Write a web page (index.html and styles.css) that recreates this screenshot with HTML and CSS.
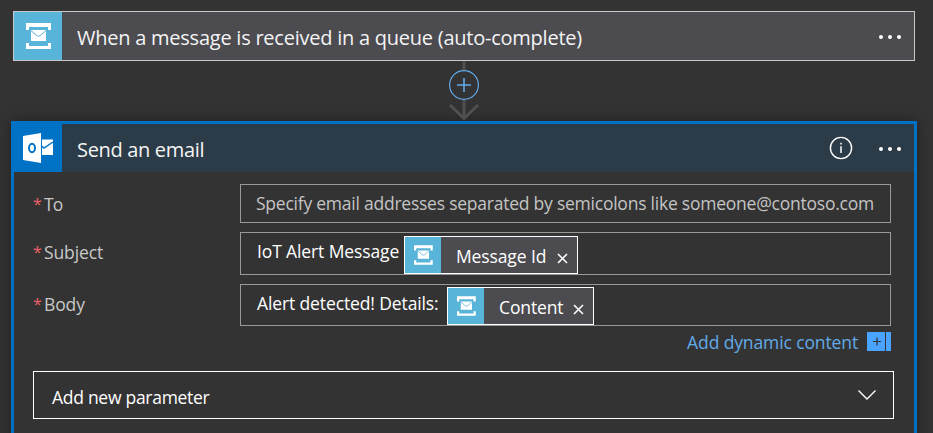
FILE: index.html
```html
<!DOCTYPE html>
<html lang="en">
<head>
<meta charset="utf-8">
<title>Logic app designer</title>
<link rel="stylesheet" href="styles.css">
</head>
<body>
<svg class="defs" aria-hidden="true">
  <symbol id="queue" viewBox="0 0 48 48">
    <path fill="#fff" d="M12 11h25v7h-3v-3H15v3h-3zM12 31h3v3h19v-3h3v6H12zM17 18h15v11H17z"/>
    <path fill="none" stroke="#59b4d9" stroke-width="1" d="M17 18.500l6 5.200q1.500 1 3 0l6-5.200"/>
  </symbol>
</svg>
<main class="designer">
  <section class="card trigger">
    <div class="brand queue"><svg width="48" height="48"><use href="#queue"/></svg></div>
    <h2 class="title">When a message is received in a queue (auto-complete)</h2>
    <div class="dots"><i></i><i></i><i></i></div>
  </section>
  <div class="connector">
    <svg width="34" height="60" viewBox="0 0 34 60">
      <path d="M17 0v58M3 44l14 13.500L31 44" fill="none" stroke="#505050" stroke-width="3"/>
      <circle cx="17" cy="24" r="14.400" fill="#333" stroke="#62aae8" stroke-width="1.200"/>
      <path d="M10 24h14M17 17v14" stroke="#62aae8" stroke-width="1.600"/>
    </svg>
  </div>
  <section class="card action">
    <header class="head">
      <div class="brand outlook">
        <svg width="48" height="48" viewBox="0 0 48 48">
          <path fill="#fff" d="M9 12l18-3v30L9 36zM28 15.500h11V31H28z"/>
          <path d="M27 21.500l3 2.500 9-6" fill="none" stroke="#0072c6" stroke-width="1.500"/>
          <ellipse cx="18" cy="24" rx="3" ry="4.200" fill="none" stroke="#0072c6" stroke-width="2"/>
        </svg>
      </div>
      <h2 class="title short">Send an email</h2>
      <svg class="info" width="24" height="24" viewBox="0 0 24 24">
        <circle cx="12" cy="12" r="10.600" fill="none" stroke="#fff" stroke-width="1.400"/>
        <path d="M12 10.300v6.700M12 6.800v1.700" stroke="#fff" stroke-width="1.500"/>
      </svg>
      <div class="dots"><i></i><i></i><i></i></div>
    </header>
    <div class="fields">
      <label class="label to"><b>*</b><span>To</span></label>
      <div class="input"><span class="hint">Specify email addresses separated by semicolons like someone@contoso.com</span></div>
      <label class="label"><b>*</b><span>Subject</span></label>
      <div class="input"><span class="value subject">IoT Alert Message</span>
        <div class="token message"><div class="brand small"><svg width="36" height="36"><use href="#queue"/></svg></div><span>Message Id</span><svg class="close" width="11" height="11" viewBox="0 0 11 11"><path d="M1 1l9 9M10 1l-9 9"/></svg></div>
      </div>
      <label class="label"><b>*</b><span>Body</span></label>
      <div class="input"><span class="value body">Alert detected! Details:</span>
        <div class="token content"><div class="brand small"><svg width="36" height="36"><use href="#queue"/></svg></div><span>Content</span><svg class="close" width="11" height="11" viewBox="0 0 11 11"><path d="M1 1l9 9M10 1l-9 9"/></svg></div>
      </div>
    </div>
    <div class="dynamic"><span>Add dynamic content</span>
      <svg width="24" height="19" viewBox="0 0 24 19"><path fill="#4aa3ff" d="M0 0h18v19H0zM19 0h5v19h-5z"/><path d="M6 9.500h8M10 5.500v8" stroke="#333" stroke-width="1.200"/></svg>
    </div>
    <div class="parameter"><span>Add new parameter</span>
      <svg width="20" height="12" viewBox="0 0 20 12"><path d="M1.500 1.500l8.500 8.500 8.500-8.500" fill="none" stroke="#fff" stroke-width="1.400"/></svg>
    </div>
  </section>
</main>
</body>
</html>
```
FILE: styles.css
```css
* { box-sizing: border-box; }
body {
  margin: 0;
  width: 933px;
  height: 433px;
  overflow: hidden;
  background: #333;
  color: #fff;
  font-family: "Open Sans", "Noto Sans", sans-serif;
  font-size: 17.5px;
  letter-spacing: -0.12px;
}
svg { display: block; flex: none; }
.defs { display: none; }
.designer { padding: 11px 16px 0 11px; }
.card { display: flex; }
.trigger {
  height: 50px;
  margin: 0 2px;
  border: 1px solid #c8c8c8;
  background: #4b4b50;
  align-items: center;
}
.brand { flex: none; width: 48px; height: 48px; }
.queue, .small { background: #59b4d9; }
.outlook { background: #0072c6; }
.title {
  flex: 1;
  margin: 0 0 0 15px;
  padding-top: 3px;
  font-size: 20px;
  line-height: 30px;
  font-weight: 400;
  letter-spacing: -0.24px;
  white-space: nowrap;
  color: #f4f4f4;
}
.title.short { letter-spacing: -0.33px; }
.dots { display: flex; gap: 5px; margin: 2px 13px 0 0; }
.dots i { width: 4px; height: 4px; border: 0.5px solid transparent; border-radius: 50%; background: #fff; background-clip: content-box; background: radial-gradient(circle, #fff 1.4px, transparent 2.1px); }
.connector { height: 60px; display: flex; justify-content: center; }
.action {
  height: 330px;
  flex-direction: column;
  border: 3px solid #0072c6;
  border-bottom: 0;
  background: #333;
  box-shadow: 0 0 14px rgba(0, 0, 0, 0.35);
}
.head {
  height: 48px;
  display: flex;
  align-items: center;
  background: #2b3c48;
}
.info { margin-right: 26px; }
.fields {
  display: grid;
  grid-template-columns: 207px 651px;
  grid-template-rows: 39px 43px 42px;
  row-gap: 9px;
  padding: 12px 0 0 19px;
}
.label {
  display: flex;
  align-items: center;
  gap: 3px;
  padding-bottom: 3px;
  color: #c8c8c8;
}
.label.to { padding-bottom: 0; letter-spacing: -0.9px; }
.label b { width: 8px; font-size: 16px; font-weight: 400; color: #f0606a; }
.input {
  display: flex;
  padding-left: 16px;
  border: 1px solid #999;
  white-space: nowrap;
}
.hint { line-height: 37px; margin-left: -1px; letter-spacing: -0.235px; color: #c4c4c4; }
.value { line-height: 36px; }
.value.subject { width: 147px; }
.value.body { width: 190px; }
.token {
  display: flex;
  align-items: center;
  height: 38px;
  margin-top: 3px;
  padding-right: 9px;
  border: 1px solid #fff;
  background: #4b4b50;
}
.token.message { width: 174px; }
.token.content { width: 147px; margin-top: 2px; }
.token span { flex: 1; padding: 1px 0 0 15px; }
.small { width: 36px; height: 36px; }
.close { margin-top: 7px; fill: none; stroke: #fff; stroke-width: 1.6; }
.dynamic {
  display: flex;
  justify-content: flex-end;
  align-items: center;
  gap: 9px;
  height: 31px;
  padding-right: 23px;
  color: #62aae8;
}
.parameter {
  display: flex;
  justify-content: space-between;
  align-items: center;
  height: 48px;
  margin: 14px 20px 0 19px;
  padding: 0 16px 0 18px;
  border: 1px solid #fff;
}
.parameter span { padding-top: 4px; letter-spacing: -0.28px; }
```
